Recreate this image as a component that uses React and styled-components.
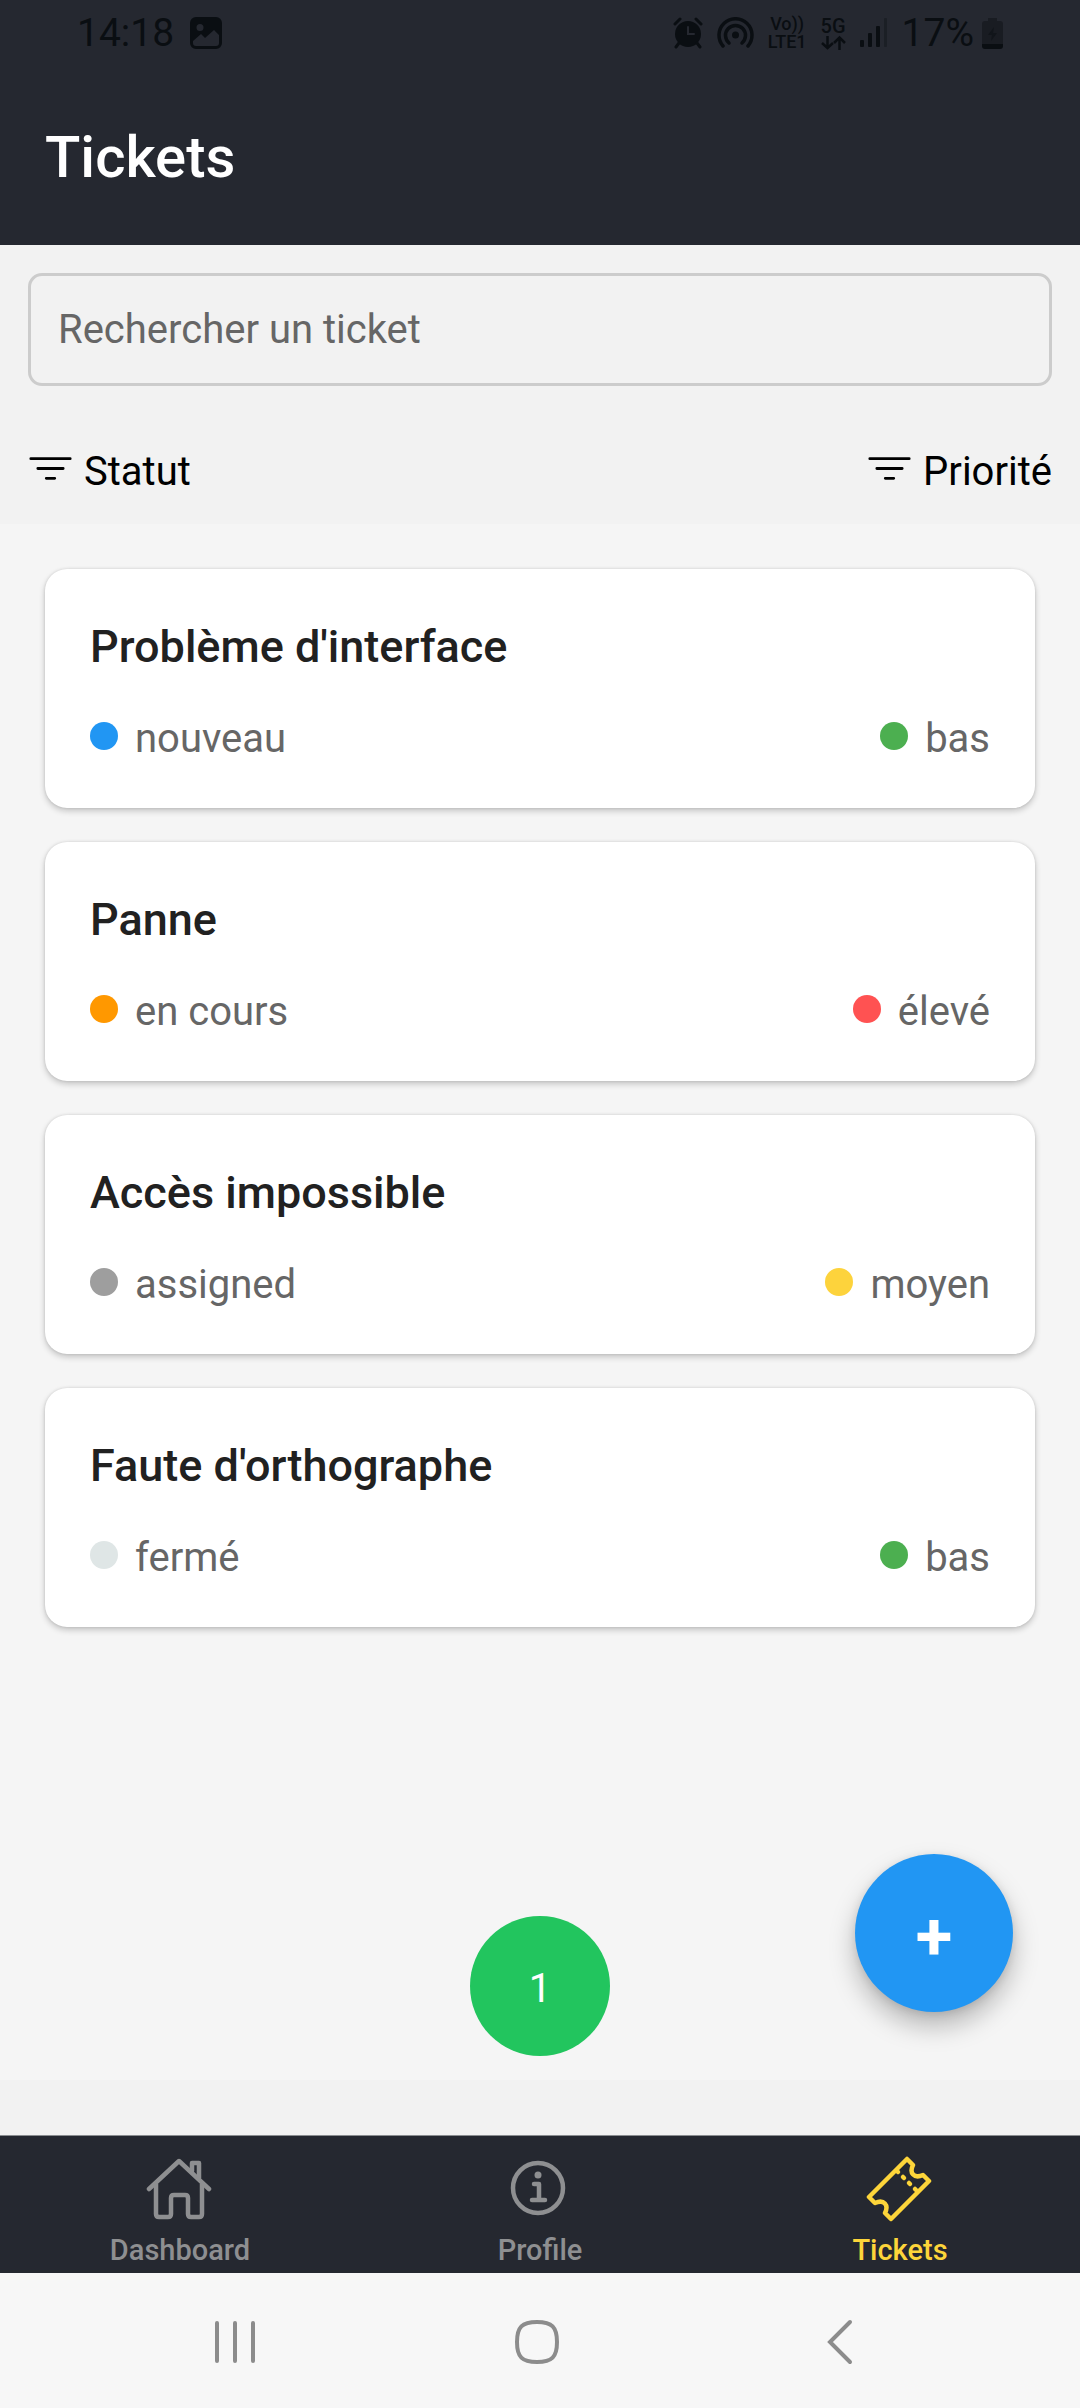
import React, { useState } from "react";
import styled, { createGlobalStyle } from "styled-components";
import { IoFilterOutline } from "react-icons/io5";

const Global = createGlobalStyle`
  *, *::before, *::after { box-sizing: border-box; }
  html, body, #root { min-height: 100vh; }
  body {
    margin: 0;
    background: #f2f2f2;
    font-family: Roboto, "Liberation Sans", sans-serif;
  }
  button, input { font: inherit; }
`;

const Screen = styled.div`
  display: flex;
  flex-direction: column;
  min-height: 100vh;
  background: #f2f2f2;
`;

const TopBar = styled.header`
  background: #252830;
  color: #fff;
`;

const StatusBar = styled.div`
  display: flex;
  align-items: center;
  justify-content: space-between;
  height: 66px;
  padding: 0 77px;
  color: #0a0e12;
  font-size: 39px;
  line-height: 66px;
`;

const StatusGroup = styled.div`
  display: flex;
  align-items: center;
  gap: ${(p) => p.$gap}px;
`;

const Network = styled.span`
  display: flex;
  flex-direction: column;
  align-items: center;
  font-size: ${(p) => p.$size}px;
  font-weight: 500;
  line-height: 18px;
`;

const Battery = styled.span`
  display: flex;
  align-items: center;
  gap: 8px;
`;

const Title = styled.h1`
  margin: 0;
  padding: 58px 45px 55px;
  font-size: 58px;
  font-weight: 500;
  line-height: 66px;
`;

const Filters = styled.section`
  padding: 28px 28px 27px;
`;

const Search = styled.input`
  display: block;
  width: 100%;
  height: 113px;
  padding: 0 27px;
  border: 3px solid #ccc;
  border-radius: 14px;
  background: transparent;
  color: #212121;
  font-size: 40px;
  outline: none;
  &::placeholder { color: #666; opacity: 1; }
`;

const FilterRow = styled.div`
  display: flex;
  justify-content: space-between;
  padding-top: 60px;
`;

const FilterButton = styled.button`
  display: flex;
  align-items: flex-start;
  gap: 11px;
  padding: 0;
  border: 0;
  background: none;
  color: #000;
  font-size: 40px;
  line-height: 51px;
  cursor: pointer;
`;

const ListArea = styled.main`
  position: relative;
  flex: 1;
  margin-bottom: 55px;
  padding: 45px;
  background: #f5f5f5;
`;

const TicketList = styled.ul`
  display: flex;
  flex-direction: column;
  gap: 34px;
  margin: 0;
  padding: 0;
  list-style: none;
`;

const Card = styled.li`
  padding: 45px;
  border-radius: 22px;
  background: #fff;
  box-shadow: 0 3px 6px rgba(0, 0, 0, 0.2), 0 0 3px rgba(0, 0, 0, 0.12);
`;

const CardTitle = styled.h2`
  margin: 0 0 35px;
  color: #212121;
  font-size: 45px;
  font-weight: 500;
  line-height: 66px;
`;

const CardMeta = styled.div`
  display: flex;
  justify-content: space-between;
`;

const Tag = styled.span`
  display: flex;
  gap: 17px;
  color: #666;
  font-size: 40px;
  line-height: 48px;
`;

const Dot = styled.span`
  width: 28px;
  height: 28px;
  margin-top: 7px;
  border-radius: 50%;
  background: ${(p) => p.$color};
`;

const PageButton = styled.button`
  position: absolute;
  bottom: 24px;
  left: 50%;
  width: 140px;
  height: 140px;
  margin-left: -70px;
  padding: 4px 0 0;
  border: 0;
  border-radius: 50%;
  background: #22c55e;
  color: #fff;
  font-size: 40px;
`;

const AddButton = styled.button`
  position: absolute;
  right: 67px;
  bottom: 68px;
  width: 158px;
  height: 158px;
  padding: 6px 0 0;
  border: 0;
  border-radius: 50%;
  background: #2196f3;
  box-shadow: 0 14px 26px rgba(0, 0, 0, 0.26), 0 2px 8px rgba(0, 0, 0, 0.1);
  color: #fff;
  font-size: 67px;
  font-weight: 700;
`;

const TabBar = styled.nav`
  display: grid;
  grid-template-columns: repeat(3, 1fr);
  height: 138px;
  border-top: 1px solid #8a8d90;
  background: #252830;
`;

const Tab = styled.a`
  display: flex;
  flex-direction: column;
  align-items: center;
  gap: 11px;
  padding-top: 18px;
  color: ${(p) => (p.$active ? "#fdd53a" : "#8e8f91")};
  font-size: 29px;
  font-weight: 500;
  line-height: 34px;
  text-decoration: none;
`;

const SystemNav = styled.div`
  display: grid;
  grid-template-columns: repeat(3, 1fr);
  height: 135px;
  padding: 0 89px 0 84px;
  background: #f7f7f7;
`;

const SystemButton = styled.button`
  display: flex;
  align-items: center;
  justify-content: center;
  padding: 3px 0 0;
  border: 0;
  background: none;
  color: #8c8c8c;
`;

const PictureIcon = () => (
  <svg width="32" height="32" viewBox="0 0 32 32" aria-hidden="true">
    <path fillRule="evenodd" fill="currentColor" d="M6 0h20a6 6 0 0 1 6 6v20a6 6 0 0 1-6 6H6a6 6 0 0 1-6-6V6a6 6 0 0 1 6-6ZM3 24v2a3 3 0 0 0 3 3h20a3 3 0 0 0 3-3V18l-5-5-9 8-4-4ZM10 7a3.500 3.500 0 1 0 0 7a3.500 3.500 0 1 0 0-7Z" />
  </svg>
);

const AlarmIcon = () => (
  <svg width="30" height="32" viewBox="0 0 30 32" fill="none" stroke="currentColor" strokeLinecap="round" aria-hidden="true">
    <circle cx="15" cy="17" r="13" fill="currentColor" stroke="none" />
    <path d="M2 7l5-5M28 7l-5-5M6 26l-3 4M24 26l3 4" strokeWidth="3" />
    <path d="M15 10v7h6" stroke="#252830" strokeWidth="2" />
  </svg>
);

const HotspotIcon = () => (
  <svg width="37" height="32" viewBox="0 0 37 32" fill="none" stroke="currentColor" strokeWidth="3.500" strokeLinecap="round" aria-hidden="true">
    <circle cx="18.500" cy="18" r="3.500" fill="currentColor" stroke="none" />
    <path d="M12 26a10 10 0 1 1 13 0" />
    <path d="M6 29a16.500 16.500 0 1 1 25 0" />
  </svg>
);

const ArrowsIcon = () => (
  <svg width="25" height="15" viewBox="0 0 25 15" fill="none" stroke="currentColor" strokeWidth="2.500" aria-hidden="true">
    <path d="M6.500 1v12M1 8L6.500 13L12 8M18.500 15V3M13 8L18.500 2.500L24 8" />
  </svg>
);

const SignalIcon = () => (
  <svg width="28" height="30" viewBox="0 0 28 30" fill="currentColor" aria-hidden="true">
    <rect x="0" y="22" width="4" height="7" rx="1" />
    <rect x="8" y="15" width="4" height="14" rx="1" />
    <rect x="16" y="8" width="4" height="21" rx="1" />
    <rect x="24" y="0" width="3" height="29" rx="1" opacity="0.350" />
  </svg>
);

const BatteryIcon = () => (
  <svg width="21" height="31" viewBox="0 0 21 31" fill="currentColor" aria-hidden="true">
    <path opacity="0.450" d="M6 0h9v3h3a3 3 0 0 1 3 3v20H0V6a3 3 0 0 1 3-3h3Z" />
    <path d="M0 26h21v2a3 3 0 0 1-3 3H3a3 3 0 0 1-3-3Z" />
    <path opacity="0.500" d="M12 9l-6 8h4l-1 6l6-8h-4Z" />
  </svg>
);

const HomeIcon = () => (
  <svg width="68" height="68" viewBox="0 0 68 68" fill="none" stroke="currentColor" strokeWidth="4.500" strokeLinecap="round" strokeLinejoin="round" aria-hidden="true">
    <path d="M3 35L33 7L63 35" />
    <path d="M10 30v30q0 3 3 3h9q3 0 3-3V44q0-3 3-3h11q3 0 3 3v16q0 3 3 3h8q3 0 3-3V30" />
    <path d="M46 17V9h7v15" />
  </svg>
);

const InfoIcon = () => (
  <svg width="68" height="68" viewBox="0 0 68 68" fill="none" stroke="currentColor" strokeWidth="4.500" strokeLinecap="round" strokeLinejoin="round" aria-hidden="true">
    <circle cx="32" cy="34" r="25" />
    <circle cx="32" cy="21" r="3.500" fill="currentColor" stroke="none" />
    <path d="M28 30h5v16M26 46h13" />
  </svg>
);

const TicketIcon = () => (
  <svg width="68" height="68" viewBox="0 0 68 68" fill="none" stroke="currentColor" strokeWidth="4.500" strokeLinecap="round" strokeLinejoin="round" aria-hidden="true">
    <path d="M41 5L3 43L9 49C18 45 23 51 19 59L25 65L63 27L57 21C48 25 43 19 47 11Z" />
    <path d="M31 17l1 1M37 23l1 1M43 29l1 1M49 35l1 1" />
  </svg>
);

const RecentIcon = () => (
  <svg width="42" height="44" viewBox="0 0 42 44" stroke="currentColor" strokeWidth="4" strokeLinecap="round" aria-hidden="true">
    <path d="M3 3v38M21 3v38M39 3v38" />
  </svg>
);

const HomeKeyIcon = () => (
  <svg width="46" height="46" viewBox="0 0 46 46" fill="none" stroke="currentColor" strokeWidth="4" aria-hidden="true">
    <path d="M23 3C38 3 43 8 43 23S38 43 23 43S3 38 3 23S8 3 23 3Z" />
  </svg>
);

const BackIcon = () => (
  <svg width="26" height="46" viewBox="0 0 26 46" fill="none" stroke="currentColor" strokeWidth="4" strokeLinecap="round" aria-hidden="true">
    <path d="M23 3L3 23L23 43" />
  </svg>
);

const tickets = [
  { title: "Problème d'interface", status: "nouveau", statusColor: "#2196f3", priority: "bas", priorityColor: "#4caf50" },
  { title: "Panne", status: "en cours", statusColor: "#ff9800", priority: "élevé", priorityColor: "#ff5252" },
  { title: "Accès impossible", status: "assigned", statusColor: "#9e9e9e", priority: "moyen", priorityColor: "#fdd33c" },
  { title: "Faute d'orthographe", status: "fermé", statusColor: "#dfe6e6", priority: "bas", priorityColor: "#4caf50" },
];

const tabs = [
  { label: "Dashboard", Icon: HomeIcon },
  { label: "Profile", Icon: InfoIcon },
  { label: "Tickets", Icon: TicketIcon, active: true },
];

export default function App() {
  const [query, setQuery] = useState("");
  const visible = tickets.filter((t) => t.title.toLowerCase().includes(query.toLowerCase()));

  return (
    <Screen>
      <Global />
      <TopBar>
        <StatusBar>
          <StatusGroup $gap={16}>
            <span>14:18</span>
            <PictureIcon />
          </StatusGroup>
          <StatusGroup $gap={14}>
            <AlarmIcon />
            <HotspotIcon />
            <Network $size={18}>
              <span>Vo))</span>
              <span>LTE1</span>
            </Network>
            <Network $size={20}>
              <span>5G</span>
              <ArrowsIcon />
            </Network>
            <SignalIcon />
            <Battery>
              <span>17%</span>
              <BatteryIcon />
            </Battery>
          </StatusGroup>
        </StatusBar>
        <Title>Tickets</Title>
      </TopBar>

      <Filters>
        <Search
          type="text"
          aria-label="Rechercher un ticket"
          placeholder="Rechercher un ticket"
          value={query}
          onChange={(e) => setQuery(e.target.value)}
        />
        <FilterRow>
          <FilterButton type="button">
            <IoFilterOutline size={45} />
            Statut
          </FilterButton>
          <FilterButton type="button">
            <IoFilterOutline size={45} />
            Priorité
          </FilterButton>
        </FilterRow>
      </Filters>

      <ListArea>
        <TicketList>
          {visible.map((t) => (
            <Card key={t.title}>
              <CardTitle>{t.title}</CardTitle>
              <CardMeta>
                <Tag>
                  <Dot $color={t.statusColor} />
                  {t.status}
                </Tag>
                <Tag>
                  <Dot $color={t.priorityColor} />
                  {t.priority}
                </Tag>
              </CardMeta>
            </Card>
          ))}
        </TicketList>
        <PageButton type="button">1</PageButton>
        <AddButton type="button">+</AddButton>
      </ListArea>

      <TabBar>
        {tabs.map(({ label, Icon, active }) => (
          <Tab key={label} href={`#${label.toLowerCase()}`} $active={active}>
            <Icon />
            {label}
          </Tab>
        ))}
      </TabBar>
      <SystemNav>
        <SystemButton type="button" aria-label="Applications récentes"><RecentIcon /></SystemButton>
        <SystemButton type="button" aria-label="Accueil"><HomeKeyIcon /></SystemButton>
        <SystemButton type="button" aria-label="Retour"><BackIcon /></SystemButton>
      </SystemNav>
    </Screen>
  );
}
